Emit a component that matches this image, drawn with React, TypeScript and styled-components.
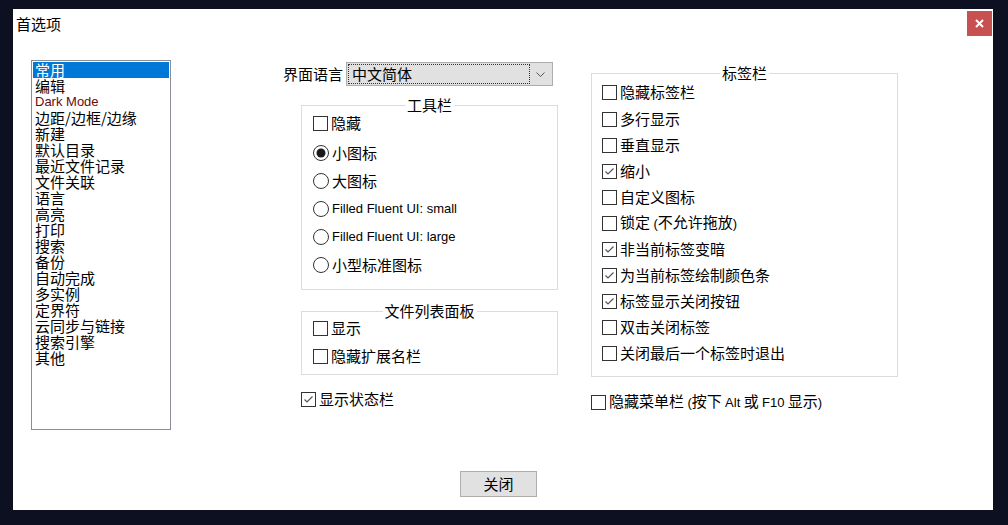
import React from 'react'
import styled, { createGlobalStyle } from 'styled-components'

const GlobalStyle = createGlobalStyle`
  html, body {
    margin: 0;
    padding: 0;
    background: #0c1020;
  }
  body {
    font-family: "Noto Sans CJK SC", "Liberation Sans", sans-serif;
    font-size: 15px;
    color: #000;
  }
`

const Page = styled.div`
  width: 1008px;
  height: 525px;
  box-sizing: border-box;
  padding: 9px 15px 15px 13px;
  background: #0c1020;
`

const Dialog = styled.div`
  width: 980px;
  height: 501px;
  background: #fff;
  display: flex;
  flex-direction: column;
`

const TitleBar = styled.div`
  height: 30px;
  display: flex;
  align-items: flex-start;
`

const Title = styled.div`
  margin: 7px 0 0 3px;
  line-height: 16px;
`

const CloseX = styled.div`
  margin: 2px 1px 0 auto;
  width: 25px;
  height: 25px;
  background: #c75050;
  display: flex;
  align-items: center;
  justify-content: center;
`

const Content = styled.div`
  flex: 1;
  display: flex;
  align-items: flex-start;
`

const ListBox = styled.div`
  margin: 21px 0 0 18px;
  width: 140px;
  height: 370px;
  box-sizing: border-box;
  border: 1px solid #8c8c96;
  padding: 1px;
`

const ListItem = styled.div<{ $selected?: boolean; $latin?: boolean }>`
  height: 16px;
  line-height: 16px;
  padding-left: 2px;
  white-space: nowrap;
  background: ${p => (p.$selected ? '#0078d7' : 'transparent')};
  color: ${p => (p.$selected ? '#fff' : p.$latin ? '#6a0a0a' : '#000')};
  font-family: ${p => (p.$latin ? '"Liberation Sans", sans-serif' : 'inherit')};
  font-size: ${p => (p.$latin ? '13px' : '15px')};
`

const MiddleColumn = styled.div`
  margin: 23px 0 0 112px;
  width: 275px;
`

const LangRow = styled.div`
  width: 270px;
  height: 24px;
  display: flex;
  align-items: center;
  justify-content: space-between;
  line-height: 16px;
`

const Select = styled.div`
  width: 207px;
  height: 24px;
  box-sizing: border-box;
  background: #e1e1e1;
  border: 1px solid #adadad;
  display: flex;
  align-items: center;
  padding: 0 1px;
`

const SelectValue = styled.div`
  width: 182px;
  height: 20px;
  box-sizing: border-box;
  border: 1px dotted #333;
  line-height: 18px;
  padding-left: 3px;
`

const Chevron = styled.div`
  flex: 1;
  display: flex;
  justify-content: center;
`

const GroupBox = styled.div<{ $top: number; $indent: number; $width: number; $pad: string }>`
  position: relative;
  margin: ${p => p.$top}px 0 0 ${p => p.$indent}px;
  width: ${p => p.$width}px;
  box-sizing: border-box;
  border: 1px solid #dcdcdc;
  padding: ${p => p.$pad};
`

const GroupTitle = styled.div`
  position: absolute;
  top: -9px;
  left: 50%;
  transform: translateX(-50%);
  background: #fff;
  padding: 0 2px;
  line-height: 16px;
  white-space: nowrap;
`

const Row = styled.div<{ $h?: number; $mb?: number }>`
  height: ${p => p.$h ?? 28}px;
  margin-bottom: ${p => p.$mb ?? 0}px;
  display: flex;
  align-items: center;
  gap: 3px;
  line-height: 16px;
  white-space: nowrap;
`

const FreeRow = styled(Row)<{ $top: number; $indent: number }>`
  margin-top: ${p => p.$top}px;
  margin-left: ${p => p.$indent}px;
`

const Label = styled.span`
  line-height: 16px;
`

const Latin = styled.span`
  font-family: "Liberation Sans", sans-serif;
  font-size: 13px;
`

const RightColumn = styled.div`
  margin: 34px 0 0 33px;
  width: 307px;
`

const Footer = styled.div`
  display: flex;
  padding: 0 0 13px 447px;
`

const Button = styled.div`
  width: 77px;
  height: 26px;
  box-sizing: border-box;
  background: #e1e1e1;
  border: 1px solid #adadad;
  display: flex;
  align-items: center;
  justify-content: center;
  line-height: 16px;
`

const Box = styled.span`
  width: 15px;
  height: 15px;
  flex: none;
  box-sizing: border-box;
  border: 1px solid #333;
  background: #fff;
  display: inline-flex;
`

const Check: React.FC<{ checked?: boolean }> = ({ checked }) => (
  <Box>
    {checked && (
      <svg width="13" height="13" viewBox="0 0 13 13">
        <polyline points="2.5,6.5 5,9 10.5,3.5" fill="none" stroke="#555" strokeWidth="1.2" />
      </svg>
    )}
  </Box>
)

const Radio: React.FC<{ checked?: boolean }> = ({ checked }) => (
  <svg width="16" height="16" viewBox="0 0 16 16" style={{ flex: 'none' }}>
    <circle cx="8" cy="8" r="7.5" fill="#fff" stroke="#333" strokeWidth="1" />
    {checked && <circle cx="8" cy="8" r="4.5" fill="#1a1a1a" />}
  </svg>
)

const menuItems = [
  '常用', '编辑', 'Dark Mode', '边距/边框/边缘', '新建', '默认目录', '最近文件记录',
  '文件关联', '语言', '高亮', '打印', '搜索', '备份', '自动完成', '多实例', '定界符',
  '云同步与链接', '搜索引擎', '其他'
]

const tabOptions: { label: React.ReactNode; checked?: boolean }[] = [
  { label: '多行显示' },
  { label: '垂直显示' },
  { label: '缩小', checked: true },
  { label: '自定义图标' },
  { label: <>锁定 <Latin>(</Latin>不允许拖放<Latin>)</Latin></> },
  { label: '非当前标签变暗', checked: true },
  { label: '为当前标签绘制颜色条', checked: true },
  { label: '标签显示关闭按钮', checked: true },
  { label: '双击关闭标签' },
  { label: '关闭最后一个标签时退出' }
]

const App: React.FC = () => {
  return (
    <Page>
      <GlobalStyle />
      <Dialog>
        <TitleBar>
          <Title>首选项</Title>
          <CloseX>
            <svg width="9" height="9" viewBox="0 0 9 9">
              <path d="M1 1L8 8M8 1L1 8" stroke="#fff" strokeWidth="2" />
            </svg>
          </CloseX>
        </TitleBar>
        <Content>
          <ListBox>
            {menuItems.map((item, i) => (
              <ListItem key={item} $selected={i === 0} $latin={item === 'Dark Mode'}>
                {item}
              </ListItem>
            ))}
          </ListBox>

          <MiddleColumn>
            <LangRow>
              <span>界面语言</span>
              <Select>
                <SelectValue>中文简体</SelectValue>
                <Chevron>
                  <svg width="9" height="5" viewBox="0 0 9 5">
                    <polyline points="0.5,0.5 4.5,4.5 8.5,0.5" fill="none" stroke="#555" strokeWidth="1" />
                  </svg>
                </Chevron>
              </Select>
            </LangRow>

            <GroupBox $top={19} $indent={18} $width={257} $pad="3px 0 10px 11px">
              <GroupTitle>工具栏</GroupTitle>
              <Row $mb={2}><Check /><Label>隐藏</Label></Row>
              <Row><Radio checked /><Label>小图标</Label></Row>
              <Row><Radio /><Label>大图标</Label></Row>
              <Row><Radio /><Latin>Filled Fluent UI: small</Latin></Row>
              <Row><Radio /><Latin>Filled Fluent UI: large</Latin></Row>
              <Row><Radio /><Label>小型标准图标</Label></Row>
            </GroupBox>

            <GroupBox $top={21} $indent={18} $width={257} $pad="2px 0 4px 11px">
              <GroupTitle>文件列表面板</GroupTitle>
              <Row><Check /><Label>显示</Label></Row>
              <Row><Check /><Label>隐藏扩展名栏</Label></Row>
            </GroupBox>

            <FreeRow $top={10} $indent={18}><Check checked /><Label>显示状态栏</Label></FreeRow>
          </MiddleColumn>

          <RightColumn>
            <GroupBox $top={0} $indent={0} $width={307} $pad="5px 0 10px 10px">
              <GroupTitle>标签栏</GroupTitle>
              <Row $h={26} $mb={1}><Check /><Label>隐藏标签栏</Label></Row>
              {tabOptions.map((opt, i) => (
                <Row key={i} $h={26}><Check checked={opt.checked} /><Label>{opt.label}</Label></Row>
              ))}
            </GroupBox>
            <FreeRow $top={11} $indent={0}>
              <Check />
              <Label>
                隐藏菜单栏 <Latin>(</Latin>按下 <Latin>Alt</Latin> 或 <Latin>F10</Latin> 显示<Latin>)</Latin>
              </Label>
            </FreeRow>
          </RightColumn>
        </Content>
        <Footer>
          <Button>关闭</Button>
        </Footer>
      </Dialog>
    </Page>
  )
}

export default App
